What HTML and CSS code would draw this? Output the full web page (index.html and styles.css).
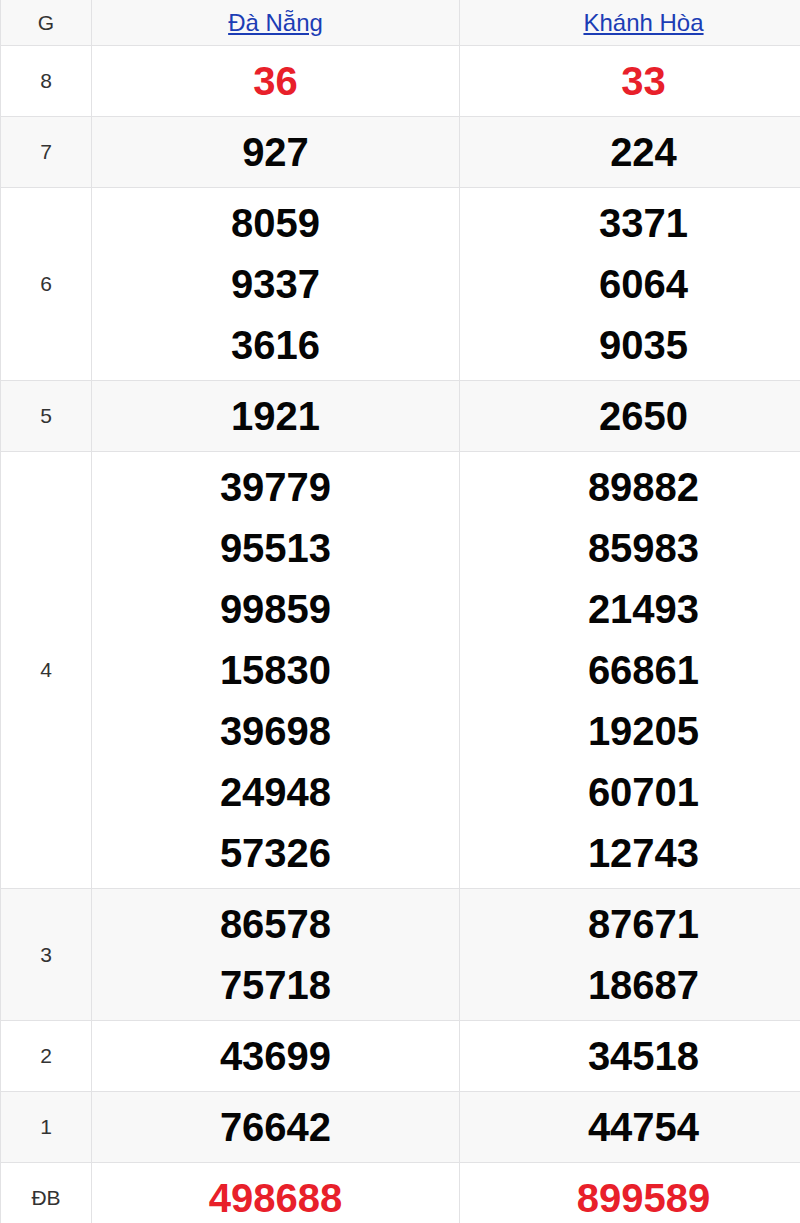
FILE: index.html
```html
<!DOCTYPE html>
<html lang="vi">
<head>
<meta charset="utf-8">
<title>Kết quả xổ số</title>
<link rel="stylesheet" href="styles.css">
</head>
<body>
<div class="wrap">
  <div class="table">
    <div class="row head">
      <div class="cell label">G</div>
      <div class="cell"><a href="#">Đà Nẵng</a></div>
      <div class="cell"><a href="#">Khánh Hòa</a></div>
    </div>
    <div class="row">
      <div class="cell label">8</div>
      <div class="cell num red"><span>36</span></div>
      <div class="cell num red"><span>33</span></div>
    </div>
    <div class="row alt">
      <div class="cell label">7</div>
      <div class="cell num"><span>927</span></div>
      <div class="cell num"><span>224</span></div>
    </div>
    <div class="row">
      <div class="cell label">6</div>
      <div class="cell num"><span>8059</span><span>9337</span><span>3616</span></div>
      <div class="cell num"><span>3371</span><span>6064</span><span>9035</span></div>
    </div>
    <div class="row alt">
      <div class="cell label">5</div>
      <div class="cell num"><span>1921</span></div>
      <div class="cell num"><span>2650</span></div>
    </div>
    <div class="row">
      <div class="cell label">4</div>
      <div class="cell num"><span>39779</span><span>95513</span><span>99859</span><span>15830</span><span>39698</span><span>24948</span><span>57326</span></div>
      <div class="cell num"><span>89882</span><span>85983</span><span>21493</span><span>66861</span><span>19205</span><span>60701</span><span>12743</span></div>
    </div>
    <div class="row alt">
      <div class="cell label">3</div>
      <div class="cell num"><span>86578</span><span>75718</span></div>
      <div class="cell num"><span>87671</span><span>18687</span></div>
    </div>
    <div class="row">
      <div class="cell label">2</div>
      <div class="cell num"><span>43699</span></div>
      <div class="cell num"><span>34518</span></div>
    </div>
    <div class="row alt">
      <div class="cell label">1</div>
      <div class="cell num"><span>76642</span></div>
      <div class="cell num"><span>44754</span></div>
    </div>
    <div class="row">
      <div class="cell label">ĐB</div>
      <div class="cell num red"><span>498688</span></div>
      <div class="cell num red"><span>899589</span></div>
    </div>
  </div>
</div>
</body>
</html>
```
FILE: styles.css
```css
html, body {
  margin: 0;
  padding: 0;
  background: #ffffff;
}
body {
  font-family: "Liberation Sans", Arial, sans-serif;
  overflow: hidden;
}
.wrap {
  width: 800px;
  overflow: hidden;
}
.table {
  width: 828px;
}
.row {
  display: grid;
  grid-template-columns: 91px 368px 368px;
  background: #ffffff;
}
.row.head,
.row.alt {
  background: #f8f8f8;
}
.cell {
  box-sizing: border-box;
  border-left: 1px solid #e2e2e4;
  border-bottom: 1px solid #e2e2e4;
  display: flex;
  flex-direction: column;
  align-items: center;
  justify-content: center;
  text-align: center;
}
.row.head .cell {
  height: 46px;
  font-size: 24px;
  color: #333333;
}
.row.head .cell.label {
  font-size: 21px;
}
.row.head a {
  color: #1c3db5;
  text-decoration: underline;
}
.label {
  font-size: 21px;
  color: #333333;
}
.num {
  padding: 5px 0 4px;
  font-size: 40px;
  font-weight: bold;
  color: #050505;
}
.num span {
  display: block;
  line-height: 61px;
}
.num.red {
  color: #e8202a;
}
```
